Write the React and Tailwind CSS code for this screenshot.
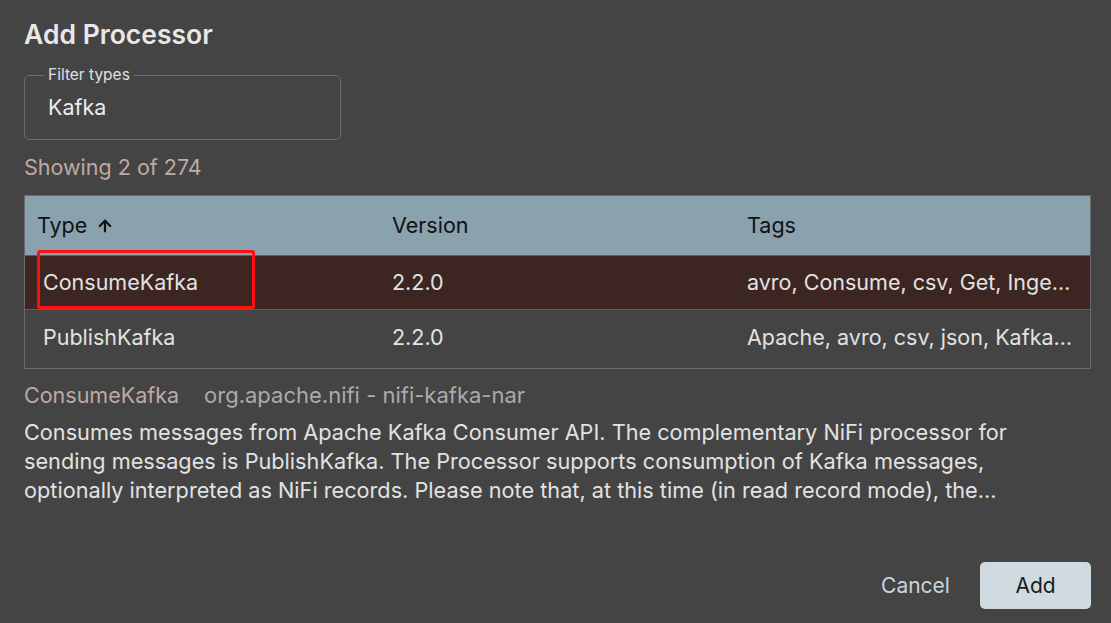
import { ArrowUp } from 'lucide-react';

const rows = [
  { type: 'ConsumeKafka', version: '2.2.0', tags: 'avro, Consume, csv, Get, Ingest, Ingress, Kafka, PubSub', selected: true },
  { type: 'PublishKafka', version: '2.2.0', tags: 'Apache, avro, csv, json, Kafka, logs, Message, PUT', selected: false },
];

export default function App() {
  return (
    <div
      className="flex h-[623px] w-[1111px] flex-col bg-[#444444] pl-6 pr-5 pt-[16px] text-[#e2e2e2]"
      style={{ fontFamily: 'Inter, "Noto Sans", sans-serif' }}
    >
      <h1 className="text-[26.5px] font-semibold leading-[36px] text-[#e8e8e8]">Add Processor</h1>

      <div className="relative mt-[23px] flex h-[65px] w-[317px] items-center rounded-[5px] border border-[#6b6b6b] pl-[23px]">
        <span className="absolute -top-[10px] left-[19px] bg-[#444444] px-[4px] text-[15.5px] leading-[18px] text-[#e0e0e0]">
          Filter types
        </span>
        <span className="text-[21.5px] text-[#ececec]">Kafka</span>
      </div>

      <p className="mt-[15px] text-[21.5px] leading-[24px] text-[#bfaaa3]">Showing 2 of 274</p>

      <div className="mt-[16px] h-[174px] border border-[#6a6a6a]">
        <div className="grid h-[60px] grid-cols-3 items-center border-b border-[#5f5f5f] bg-[#89a2ae] text-[21.5px] text-[#111111]">
          <div className="flex items-center gap-[9px] px-[12px]">
            Type
            <ArrowUp size={18} strokeWidth={3} />
          </div>
          <div className="px-[12px]">Version</div>
          <div className="px-[12px]">Tags</div>
        </div>
        {rows.map((row) => (
          <div
            key={row.type}
            className={`relative grid h-[54px] grid-cols-3 items-center text-[21.5px] ${
              row.selected ? 'border-b border-[#5f5f5f] bg-[#3d2622]' : ''
            }`}
          >
            <div className="px-[18px]">{row.type}</div>
            <div className="px-[12px]">{row.version}</div>
            <div className="truncate px-[12px]">{row.tags}</div>
            {row.selected && (
              <span className="absolute -top-[6px] left-[12px] h-[59px] w-[218px] rounded-[3px] border-[3px] border-[#ff1010]" />
            )}
          </div>
        ))}
      </div>

      <div className="mt-[13px] flex items-center gap-[25px] text-[21.5px] leading-[26px]">
        <span className="text-[#bfaaa3]">ConsumeKafka</span>
        <span className="text-[22px] text-[#ababab]">org.apache.nifi - nifi-kafka-nar</span>
      </div>
      <p className="mt-[10px] line-clamp-3 max-w-[1040px] text-[21.7px] leading-[29px] text-[#e2e2e2]">
        Consumes messages from Apache Kafka Consumer API. The complementary NiFi processor for sending messages is
        PublishKafka. The Processor supports consumption of Kafka messages, optionally interpreted as NiFi records.
        Please note that, at this time (in read record mode), the Processor assumes that all records that are
        retrieved from a given partition have the same schema.
      </p>

      <div className="mt-auto mb-[14px] flex items-center justify-end gap-[9px]">
        <button className="h-[47px] w-[111px] rounded-[5px] text-[21px] text-[#c9d5db]">Cancel</button>
        <button className="h-[47px] w-[111px] rounded-[5px] bg-[#cfdbe0] text-[21px] text-[#1a1a1a]">Add</button>
      </div>
    </div>
  );
}
